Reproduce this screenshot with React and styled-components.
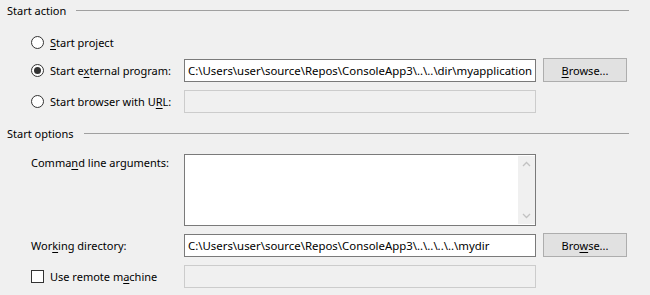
import styled, { createGlobalStyle } from "styled-components";

const Global = createGlobalStyle`
  body {
    margin: 0;
    background: #f0f0f0;
    font-family: "Noto Sans", "Open Sans", sans-serif;
    font-size: 11px;
    color: #000;
  }
`;

const Page = styled.div`
  width: 650px;
  height: 295px;
  background: #f0f0f0;
  display: flex;
  flex-direction: column;
  overflow: hidden;
`;

const GroupHeader = styled.div`
  display: flex;
  align-items: center;
  height: 21px;
  padding-left: 7px;
  padding-right: 21px;
  margin-top: ${(p) => p.$top || 0}px;
`;

const GroupTitle = styled.span`
  white-space: nowrap;
  margin-right: 10px;
  line-height: 21px;
`;

const Rule = styled.div`
  flex: 1;
  height: 1px;
  background: #a0a0a0;
  margin-top: -1px;
`;

const Row = styled.div`
  display: grid;
  grid-template-columns: 146px 352px 84px;
  column-gap: 7px;
  align-items: ${(p) => (p.$top ? "start" : "center")};
  padding-left: 31px;
  min-height: 24px;
  margin-top: ${(p) => p.$gap || 0}px;
`;

const Choice = styled.label`
  display: flex;
  align-items: center;
  gap: 6px;
  white-space: nowrap;
`;

const Radio = styled.span`
  width: 13px;
  height: 13px;
  box-sizing: border-box;
  border: 1px solid #333;
  border-radius: 50%;
  background: #fff;
  display: flex;
  align-items: center;
  justify-content: center;
  flex-shrink: 0;

  &::after {
    content: "";
    width: 7px;
    height: 7px;
    border-radius: 50%;
    background: ${(p) => (p.$checked ? "#333" : "transparent")};
  }
`;

const Check = styled.span`
  width: 13px;
  height: 13px;
  box-sizing: border-box;
  border: 1px solid #333;
  background: #fff;
  flex-shrink: 0;
`;

const Label = styled.span`
  white-space: nowrap;
  padding-top: ${(p) => (p.$top ? "1px" : "0")};
`;

const Key = styled.span`
  text-decoration: underline;
  text-underline-offset: 2px;
`;

const TextBox = styled.div`
  height: 23px;
  box-sizing: border-box;
  border: 1px solid ${(p) => (p.$disabled ? "#cccccc" : "#7a7a7a")};
  background: ${(p) => (p.$disabled ? "#f0f0f0" : "#fff")};
  padding: 0 3px;
  display: flex;
  align-items: center;
  white-space: nowrap;
  overflow: hidden;
  font-size: 11.4px;
`;

const TextArea = styled.div`
  height: 72px;
  box-sizing: border-box;
  border: 1px solid #7a7a7a;
  background: #fff;
  display: flex;
  justify-content: flex-end;
  padding: 1px 0;
`;

const ScrollBar = styled.div`
  width: 17px;
  background: #f0f0f0;
  display: flex;
  flex-direction: column;
  justify-content: space-between;
  align-items: center;
  padding: 5px 0;
`;

const Button = styled.div`
  height: 24px;
  box-sizing: border-box;
  border: 1px solid #adadad;
  background: #e1e1e1;
  display: flex;
  align-items: center;
  justify-content: center;
`;

const Chevron = ({ up }) => (
  <svg width="9" height="6" viewBox="0 0 9 6">
    <path
      d={up ? "M1 5 L4.5 1.5 L8 5" : "M1 1 L4.5 4.5 L8 1"}
      fill="none"
      stroke="#c2c2c2"
      strokeWidth="1.3"
    />
  </svg>
);

export default function App() {
  return (
    <Page>
      <Global />
      <GroupHeader>
        <GroupTitle>Start action</GroupTitle>
        <Rule />
      </GroupHeader>

      <Row $gap={9}>
        <Choice>
          <Radio />
          <span>
            <Key>S</Key>tart project
          </span>
        </Choice>
      </Row>

      <Row $gap={4}>
        <Choice>
          <Radio $checked />
          <span>
            Start e<Key>x</Key>ternal program:
          </span>
        </Choice>
        <TextBox>C:\Users\user\source\Repos\ConsoleApp3\..\..\dir\myapplication</TextBox>
        <Button>
          <span>
            <Key>B</Key>rowse...
          </span>
        </Button>
      </Row>

      <Row $gap={7}>
        <Choice>
          <Radio />
          <span>
            Start browser with U<Key>R</Key>L:
          </span>
        </Choice>
        <TextBox $disabled />
      </Row>

      <GroupHeader $top={10}>
        <GroupTitle>Start options</GroupTitle>
        <Rule />
      </GroupHeader>

      <Row $gap={10} $top>
        <Label $top>
          Comma<Key>n</Key>d line arguments:
        </Label>
        <TextArea>
          <ScrollBar>
            <Chevron up />
            <Chevron />
          </ScrollBar>
        </TextArea>
      </Row>

      <Row $gap={7}>
        <Label>
          Wor<Key>k</Key>ing directory:
        </Label>
        <TextBox>C:\Users\user\source\Repos\ConsoleApp3\..\..\..\..\mydir</TextBox>
        <Button>
          <span>
            Bro<Key>w</Key>se...
          </span>
        </Button>
      </Row>

      <Row $gap={7}>
        <Choice>
          <Check />
          <span>
            Use remote m<Key>a</Key>chine
          </span>
        </Choice>
        <TextBox $disabled />
      </Row>
    </Page>
  );
}
